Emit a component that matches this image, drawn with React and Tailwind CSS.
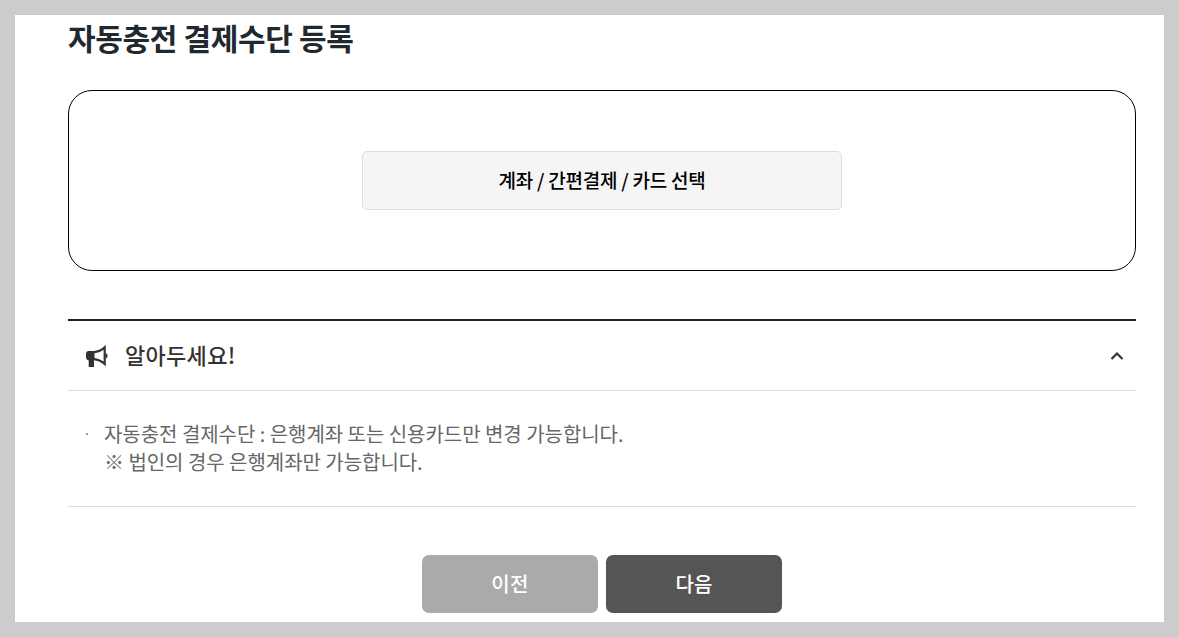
export default function App() {
  return (
    <div className="h-[637px] w-[1179px] bg-[#ccc] p-[15px] font-['Noto_Sans_CJK_KR',sans-serif]">
      <main className="flex h-[607px] flex-col bg-white pl-[53px] pr-7">
        <h1 className="h-12 text-[30px] leading-[45px] font-bold tracking-[-0.35px] text-[#1f292f]">자동충전 결제수단 등록</h1>
        <section className="mt-[27px] flex h-[181px] shrink-0 items-center justify-center rounded-[24px] border border-black">
          <button className="h-[59px] w-[480px] rounded-[5px] border border-[#ddd] bg-[#f5f5f5] text-[19px] font-medium tracking-[-0.24px] text-black">계좌 / 간편결제 / 카드 선택</button>
        </section>
        <section className="mt-12 border-t-2 border-b border-t-[#231f20] border-b-[#ddd]">
          <header className="flex h-[70px] items-center border-b border-[#ddd] pl-[17px] pr-3">
            <svg className="h-[24px] w-[24px]" viewBox="0 0 24 24">
              <path d="M3.500 7H9.500V15.800H9V23H3.700V16.300C2 16 1 14.800 1 13V10C1 8 2 7 3.500 7Z" fill="#333" />
              <path d="M9 8.100C12.500 8 16.500 6.200 19.700 3.400V20C16.500 17.200 12.500 15.400 9 15.200" fill="none" stroke="#333" strokeWidth="2.200" />
              <path d="M20.500 9C23.300 9.700 23.300 13.900 20.500 14.600Z" fill="#333" />
            </svg>
            <h2 className="ml-4 pb-[3px] text-[22px] font-medium tracking-[0.3px] text-[#333]">알아두세요!</h2>
            <svg className="ml-auto h-3 w-[14px]" viewBox="0 0 14 12"><path d="M1.500 9L7 3.500L12.500 9" fill="none" stroke="#333" strokeWidth="2.200" /></svg>
          </header>
          <div className="flex h-[115px] pl-4 pt-[29px] text-[20px] leading-7 tracking-[-0.04px] text-[#666]">
            <div className="w-5 pt-[13px] pl-[2px]"><div className="size-[2px] bg-[#999]" /></div>
            <p>자동충전 결제수단 : 은행계좌 또는 신용카드만 변경 가능합니다.<br />※ 법인의 경우 은행계좌만 가능합니다.</p>
          </div>
        </section>
        <div className="mt-12 flex justify-center gap-2 text-[20px] font-medium text-white">
          <button className="h-[58px] w-44 rounded-[7px] bg-[#aaa] tracking-[0.4px]">이전</button>
          <button className="h-[58px] w-44 rounded-[7px] bg-[#555] tracking-[0.2px]">다음</button>
        </div>
      </main>
    </div>
  );
}
